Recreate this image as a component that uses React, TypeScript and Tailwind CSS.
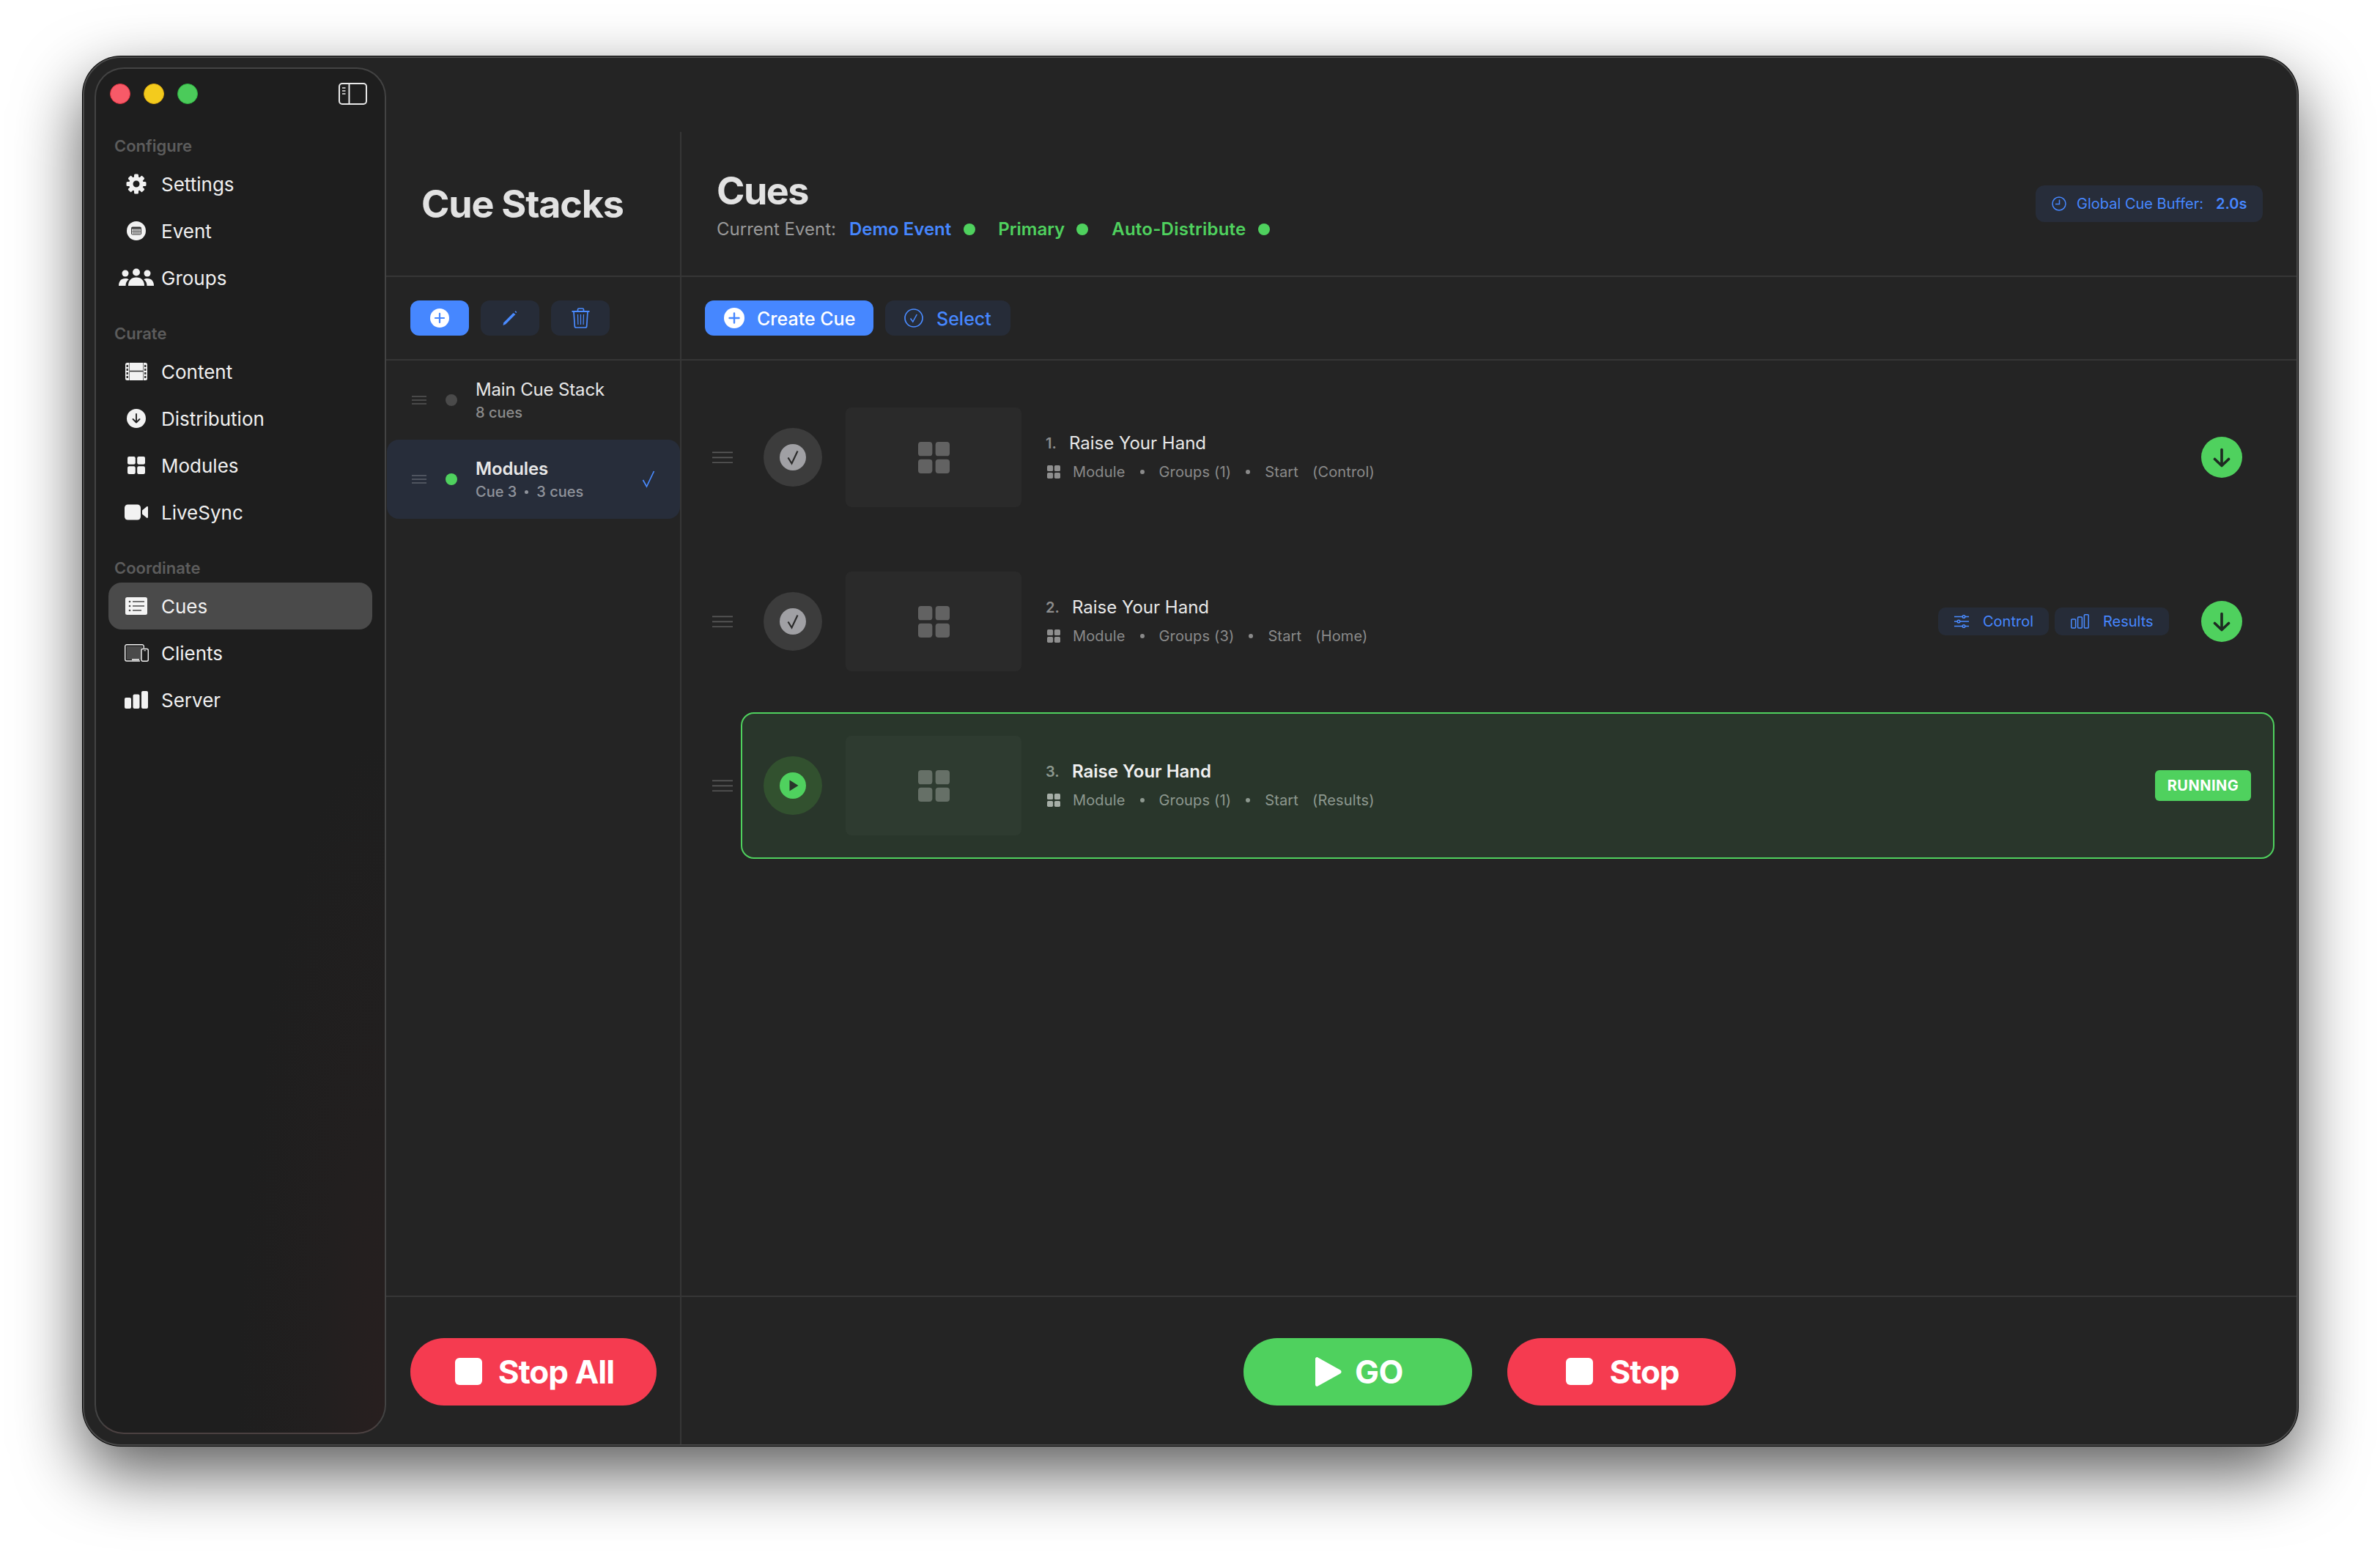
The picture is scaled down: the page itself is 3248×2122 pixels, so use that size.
import type { ReactNode } from "react"

const font = { fontFamily: "Inter, 'Noto Sans', sans-serif" }

// ---- icons ----

function GearIcon() {
  const teeth = [0, 45, 90, 135, 180, 225, 270, 315]
  return (
    <svg width="28" height="28" viewBox="0 0 28 28" fill="#f2f2f2">
      {teeth.map((a) => (
        <rect key={a} x="11" y="0.5" width="6" height="7" rx="1.5" transform={`rotate(${a} 14 14)`} />
      ))}
      <path fillRule="evenodd" d="M14 4a10 10 0 1 0 0 20a10 10 0 0 0 0-20zm0 5.5a4.5 4.5 0 1 1 0 9a4.5 4.5 0 0 1 0-9z" />
    </svg>
  )
}

function EventIcon() {
  return (
    <svg width="26" height="26" viewBox="0 0 26 26">
      <circle cx="13" cy="13" r="13" fill="#f2f2f2" />
      <rect x="6" y="7.5" width="14" height="11" rx="2" fill="#3a3a3a" />
      <rect x="7" y="10.5" width="12" height="7" fill="#d8d8d8" />
      <path d="M9 11v6M11 11v6M13 11v6M15 11v6M17 11v6M7 14h12" stroke="#555" strokeWidth="0.7" />
    </svg>
  )
}

function GroupsIcon() {
  return (
    <svg width="48" height="26" viewBox="0 0 48 26" fill="#f2f2f2">
      <circle cx="9" cy="7" r="4.5" />
      <circle cx="24" cy="5.5" r="5" />
      <circle cx="39" cy="7" r="4.5" />
      <path d="M0 24c0-6 3-10 9-10c2 0 3.500.5 4.800 1.300C10.800 17.500 9.500 20.500 9.500 24z" />
      <path d="M13 24c0-7 4-11.500 11-11.500S35 17 35 24z" />
      <path d="M48 24c0-6-3-10-9-10c-2 0-3.500.5-4.800 1.300c3 2.200 4.300 5.200 4.300 8.700z" />
    </svg>
  )
}

function ContentIcon() {
  return (
    <svg width="30" height="24" viewBox="0 0 30 24">
      <rect width="30" height="24" rx="2.500" fill="#f2f2f2" />
      <path d="M6 11.500h18" stroke="#333" strokeWidth="1.600" />
      <path d="M5.500 0v24M24.500 0v24" stroke="#555" strokeWidth="0.800" />
      {[3, 8, 13, 18].map((y) => (
        <g key={y}>
          <rect x="1.500" y={y} width="2.500" height="3" fill="#3a3a3a" />
          <rect x="26" y={y} width="2.500" height="3" fill="#3a3a3a" />
        </g>
      ))}
    </svg>
  )
}

function DistributionIcon() {
  return (
    <svg width="26" height="26" viewBox="0 0 26 26">
      <circle cx="13" cy="13" r="13" fill="#f2f2f2" />
      <path d="M13 7v11M8.500 14l4.500 4.500l4.500-4.500" fill="none" stroke="#222" strokeWidth="1.900" strokeLinecap="round" strokeLinejoin="round" />
    </svg>
  )
}

function GridIcon({ size, color }: { size: number; color: string }) {
  return (
    <svg width={size} height={size} viewBox="0 0 24 24" fill={color} className="shrink-0">
      <rect x="0" y="0" width="10.800" height="10.800" rx="2.200" />
      <rect x="13.200" y="0" width="10.800" height="10.800" rx="2.200" />
      <rect x="0" y="13.200" width="10.800" height="10.800" rx="2.200" />
      <rect x="13.200" y="13.200" width="10.800" height="10.800" rx="2.200" />
    </svg>
  )
}

function VideoIcon() {
  return (
    <svg width="32" height="22" viewBox="0 0 32 22" fill="#f2f2f2">
      <rect width="22" height="21" y="0.500" rx="4.500" />
      <path d="M24 8.500l6-5c1-.8 2-.3 2 1v13c0 1.300-1 1.800-2 1l-6-5z" />
    </svg>
  )
}

function CuesIcon() {
  return (
    <svg width="30" height="24" viewBox="0 0 30 24">
      <rect width="30" height="24" rx="2.500" fill="#f4f4f4" />
      <g fill="#4a4a4a">
        <circle cx="6" cy="6" r="1.300" />
        <circle cx="6" cy="12" r="1.300" />
        <circle cx="6" cy="18" r="1.300" />
        <rect x="10" y="5.200" width="16" height="1.500" />
        <rect x="10" y="11.200" width="16" height="1.500" />
        <rect x="10" y="17.200" width="12" height="1.500" />
      </g>
    </svg>
  )
}

function ClientsIcon() {
  return (
    <svg width="33" height="24" viewBox="0 0 33 24" fill="none" stroke="#f2f2f2" strokeWidth="1.400">
      <path d="M21 23H3a2.300 2.300 0 0 1-2.300-2.300V3A2.300 2.300 0 0 1 3 .7h21A2.300 2.300 0 0 1 26.300 3v2.500" />
      <rect x="3" y="3" width="21" height="18" fill="#4a4a4a" stroke="none" />
      <path d="M10 21h10" strokeWidth="1.600" />
      <rect x="23" y="6.500" width="9.300" height="16.800" rx="2" fill="#1e1e1e" />
      <path d="M26.500 8.800h2.400" strokeWidth="1" />
    </svg>
  )
}

function ServerIcon() {
  return (
    <svg width="32" height="24" viewBox="0 0 32 24" fill="#f2f2f2">
      <rect x="0" y="9" width="9" height="15" rx="2" />
      <rect x="11.500" y="4.500" width="9" height="19.500" rx="2" />
      <rect x="23" y="0" width="9" height="24" rx="2" />
    </svg>
  )
}

function SidebarToggleIcon() {
  return (
    <svg width="39" height="30" viewBox="0 0 39 30" fill="none" stroke="#e8e8e8" strokeWidth="2">
      <rect x="1" y="1" width="37" height="28" rx="4" />
      <path d="M14.500 1v28" />
      <path d="M5 7h4.500M5 11h4.500M5 15h4.500" strokeWidth="1.600" />
    </svg>
  )
}

function DragIcon({ w, color }: { w: number; color: string }) {
  return (
    <svg width={w} height={w * 0.6} viewBox="0 0 20 12" stroke={color} strokeWidth={w > 24 ? 1.200 : 1.500} className="shrink-0">
      <path d="M0 1h20M0 6h20M0 11h20" />
    </svg>
  )
}

function PlusCircle({ size, color }: { size: number; color: string }) {
  return (
    <svg width={size} height={size} viewBox="0 0 28 28" className="shrink-0">
      <circle cx="14" cy="14" r="14" fill="#fff" />
      <path d="M14 7.500v13M7.500 14h13" stroke={color} strokeWidth="2.400" strokeLinecap="round" />
    </svg>
  )
}

function PencilIcon() {
  return (
    <svg width="20" height="20" viewBox="0 0 20 20" fill="#4a8bff">
      <path d="M14.500 3l3 2L4 18.500L.5 20l.8-3.700z" />
      <path d="M16.500 1.500l1-1.200l1.800 1.400l-.9 1.500z" />
    </svg>
  )
}

function TrashIcon() {
  return (
    <svg width="25" height="28" viewBox="0 0 25 28" fill="none" stroke="#4a8bff" strokeWidth="1.700">
      <path d="M0.500 5h24" strokeWidth="2" />
      <path d="M8.500 5V2.500A1.500 1.500 0 0 1 10 1h5a1.500 1.500 0 0 1 1.500 1.500V5" />
      <path d="M3 5l1.300 20a2 2 0 0 0 2 2h12.400a2 2 0 0 0 2-2L22 5" />
      <path d="M8.500 9l.4 14M12.500 9v14M16.500 9l-.4 14" strokeWidth="1.200" />
    </svg>
  )
}

function SelectIcon() {
  return (
    <svg width="26" height="26" viewBox="0 0 26 26" fill="none" stroke="#4a8bff" className="shrink-0">
      <circle cx="13" cy="13" r="12" strokeWidth="1.700" />
      <path d="M8.500 13.500l3.300 4.500l5.500-10" strokeWidth="1.500" />
    </svg>
  )
}

function ThinCheck() {
  return (
    <svg width="18" height="24" viewBox="0 0 18 24" fill="none" stroke="#4a8bff" strokeWidth="1.700">
      <path d="M1.500 13l5 9L16.500 1" />
    </svg>
  )
}

function ClockIcon() {
  return (
    <svg width="20" height="20" viewBox="0 0 20 20" fill="none" stroke="#4687ff" strokeWidth="1.500" className="shrink-0">
      <circle cx="10" cy="10" r="9" />
      <path d="M10.500 4.500v6H5" />
    </svg>
  )
}

function SlidersIcon() {
  return (
    <svg width="20" height="20" viewBox="0 0 20 20" fill="#262c38" stroke="#4a8bff" strokeWidth="1.500" className="shrink-0">
      <path d="M0 3.500h20M0 10h20M0 16.500h20" />
      <circle cx="13" cy="3.500" r="1.800" />
      <circle cx="6" cy="10" r="1.800" />
      <circle cx="13" cy="16.500" r="1.800" />
    </svg>
  )
}

function BarsIcon() {
  return (
    <svg width="25" height="20" viewBox="0 0 25 20" fill="none" stroke="#4a8bff" strokeWidth="1.500" className="shrink-0">
      <rect x="0.800" y="7" width="5.800" height="12" rx="1" />
      <rect x="9.600" y="4" width="5.800" height="15" rx="1" />
      <rect x="18.400" y="0.800" width="5.800" height="18.200" rx="1" />
    </svg>
  )
}

function DownloadButton() {
  return (
    <div className="w-[56px] h-[56px] rounded-full bg-[#4fd15e] flex items-center justify-center shrink-0">
      <svg width="24" height="27" viewBox="0 0 24 27" fill="none" stroke="#1e2a22" strokeWidth="3.600" strokeLinecap="round" strokeLinejoin="round">
        <path d="M12 2.500v22M2.500 15.500l9.500 9l9.500-9" />
      </svg>
    </div>
  )
}

// ---- sidebar ----

function NavLabel({ children }: { children: ReactNode }) {
  return <div className="h-[30px] pl-[25px] mb-[5px] flex items-center text-[22px] font-semibold text-[#5c5c5c]">{children}</div>
}

function NavItem({ icon, label, active }: { icon: ReactNode; label: string; active?: boolean }) {
  return (
    <div className={`h-[64px] w-[360px] ml-[17px] pl-[8px] flex items-center rounded-[18px] ${active ? "bg-[#4a4a4a]" : ""}`}>
      <div className="w-[60px] flex items-center justify-center shrink-0">{icon}</div>
      <span className="ml-[4px] text-[26px] text-[#f0f0f0]">{label}</span>
    </div>
  )
}

function Sidebar() {
  return (
    <aside className="w-[398px] ml-[14px] mt-[13px] mb-[14px] shrink-0 rounded-[40px] border-2 border-[#434343] border-b-[#4b4141] bg-[#1e1e1e] bg-[radial-gradient(ellipse_at_100%_100%,#281f1f_0%,#221f1f_16%,#1e1e1e_36%)]">
      <div className="h-[90px] pl-[19px] pr-[24px] pt-[19px] flex items-start justify-between">
        <div className="flex gap-[18px] pt-[1px]">
          <div className="w-[28px] h-[28px] rounded-full bg-[#f75a68] border border-[#e0303f]" />
          <div className="w-[28px] h-[28px] rounded-full bg-[#f3cb1d] border border-[#dca90f]" />
          <div className="w-[28px] h-[28px] rounded-full bg-[#4bcb5a] border border-[#2cb140]" />
        </div>
        <SidebarToggleIcon />
      </div>
      <NavLabel>Configure</NavLabel>
      <NavItem icon={<GearIcon />} label="Settings" />
      <NavItem icon={<EventIcon />} label="Event" />
      <NavItem icon={<GroupsIcon />} label="Groups" />
      <div className="h-[29px]" />
      <NavLabel>Curate</NavLabel>
      <NavItem icon={<ContentIcon />} label="Content" />
      <NavItem icon={<DistributionIcon />} label="Distribution" />
      <NavItem icon={<GridIcon size={24} color="#f2f2f2" />} label="Modules" />
      <NavItem icon={<VideoIcon />} label="LiveSync" />
      <div className="h-[29px]" />
      <NavLabel>Coordinate</NavLabel>
      <NavItem icon={<CuesIcon />} label="Cues" active />
      <NavItem icon={<ClientsIcon />} label="Clients" />
      <NavItem icon={<ServerIcon />} label="Server" />
    </aside>
  )
}

// ---- cue stacks column ----

function IconButton({ children, primary }: { children: ReactNode; primary?: boolean }) {
  return (
    <div className={`w-[80px] h-[48px] rounded-[12px] flex items-center justify-center ${primary ? "bg-[#4687ff]" : "bg-[#262c38]"}`}>
      {children}
    </div>
  )
}

function StopButton({ label, width }: { label: string; width: string }) {
  return (
    <div className={`${width} h-[92px] pl-[3px] rounded-full bg-[#f53b50] flex items-center justify-center gap-[22px]`}>
      <div className="w-[37px] h-[37px] rounded-[6px] bg-white" />
      <span className="text-[44px] font-bold text-white tracking-[-1px]">{label}</span>
    </div>
  )
}

function StacksColumn() {
  return (
    <div className="w-[403px] shrink-0 border-r-2 border-[#363636] flex flex-col">
      <div className="h-[198px] border-b-2 border-[#363636] pl-[48px] pt-[2px] flex items-center">
        <h1 className="text-[52px] font-bold text-[#e2e2e2] tracking-[-1.200px]">Cue Stacks</h1>
      </div>
      <div className="h-[114px] border-b-2 border-[#363636] pl-[33px] flex items-center gap-[16px]">
        <IconButton primary>
          <PlusCircle size={26} color="#4687ff" />
        </IconButton>
        <IconButton>
          <PencilIcon />
        </IconButton>
        <IconButton>
          <TrashIcon />
        </IconButton>
      </div>
      <div className="flex-1 pl-[1px]">
        <div className="h-[108px] pl-[34px] flex items-center">
          <DragIcon w={20} color="#565656" />
          <div className="w-[16px] h-[16px] rounded-full bg-[#4a4a4a] ml-[26px] shrink-0" />
          <div className="ml-[25px] pt-[2px]">
            <div className="text-[24px] leading-[32px] text-[#e8e8e8] tracking-[-0.150px]">Main Cue Stack</div>
            <div className="text-[20px] leading-[30px] font-medium text-[#8c8c8c]">8 cues</div>
          </div>
        </div>
        <div className="h-[108px] w-[400px] pl-[34px] pr-[34px] rounded-[16px] bg-[#272d3a] flex items-center">
          <DragIcon w={20} color="#5d626c" />
          <div className="w-[16px] h-[16px] rounded-full bg-[#4fd15e] ml-[26px] shrink-0" />
          <div className="ml-[25px] pt-[2px]">
            <div className="text-[24px] leading-[32px] font-semibold text-[#e8e8e8] tracking-[-0.150px]">Modules</div>
            <div className="text-[20px] leading-[30px] font-medium text-[#8f939b] flex items-center">
              Cue 3<span className="w-[5px] h-[5px] rounded-full bg-[#8f939b] mx-[11px]" />3 cues
            </div>
          </div>
          <div className="ml-auto">
            <ThinCheck />
          </div>
        </div>
      </div>
      <div className="h-[203px] border-t-2 border-[#363636] pl-[33px] pt-[2px] flex items-center">
        <StopButton label="Stop All" width="w-[336px]" />
      </div>
    </div>
  )
}

// ---- cues column ----

function Chip({ icon, label, width }: { icon: ReactNode; label: string; width: string }) {
  return (
    <div className={`${width} h-[38px] rounded-[10px] bg-[#262c38] pl-[22px] flex items-center gap-[19px]`}>
      {icon}
      <span className="text-[20px] text-[#4687ff]">{label}</span>
    </div>
  )
}

function Dot({ color }: { color: string }) {
  return <span className="w-[6px] h-[6px] rounded-full mx-[20px] shrink-0" style={{ backgroundColor: color }} />
}

type Cue = {
  num: number
  groups: number
  target: string
  state: "done" | "running"
  chips?: boolean
}

const cues: Cue[] = [
  { num: 1, groups: 1, target: "(Control)", state: "done" },
  { num: 2, groups: 3, target: "(Home)", state: "done", chips: true },
  { num: 3, groups: 1, target: "(Results)", state: "running" },
]

function CueRow({ cue }: { cue: Cue }) {
  const running = cue.state === "running"
  const sub = running ? "#8d988f" : "#8a8a8a"
  return (
    <div className="h-[200px] flex items-center">
      <DragIcon w={28} color="#585858" />
      <div
        className={`ml-[11px] flex-1 h-[200px] rounded-[18px] border-2 pl-[29px] flex items-center ${
          running ? "border-[#4fd15e] bg-[#29362b] pr-[30px]" : "border-transparent pr-[42px]"
        }`}
      >
        <div className={`w-[80px] h-[80px] rounded-full flex items-center justify-center shrink-0 ${running ? "bg-[#32512f]" : "bg-[#3c3c3c]"}`}>
          {running ? (
            <svg width="36" height="36" viewBox="0 0 36 36">
              <circle cx="18" cy="18" r="18" fill="#4fd15e" />
              <path d="M13.500 10.500v15l12-7.500z" fill="#29362b" />
            </svg>
          ) : (
            <svg width="36" height="36" viewBox="0 0 36 36">
              <circle cx="18" cy="18" r="18" fill="#a0a0a4" />
              <path d="M11.500 18.500l5 8L24.500 9.500" fill="none" stroke="#2b2b2b" strokeWidth="2.200" />
            </svg>
          )}
        </div>
        <div className={`ml-[32px] w-[240px] h-[136px] rounded-[8px] flex items-center justify-center shrink-0 ${running ? "bg-[#2e3b30]" : "bg-[#2a2a2a]"}`}>
          <GridIcon size={43} color={running ? "#667067" : "#626262"} />
        </div>
        <div className="ml-[33px]">
          <div className="h-[36px] flex items-center">
            <span className={`text-[20px] font-semibold ${running ? "text-[#8d988f]" : "text-[#8d8d8d]"}`} style={{ width: cue.num === 1 ? 32 : 36 }}>
              {cue.num}.
            </span>
            <span className={`text-[24px] ${running ? "font-semibold text-[#f0f0f0]" : "text-[#e8e8e8]"}`}>Raise Your Hand</span>
          </div>
          <div className="h-[36px] mt-[3px] flex items-center text-[20px] tracking-[0.150px]" style={{ color: sub }}>
            <span className="ml-[2px] mr-[17px]">
              <GridIcon size={18} color={running ? "#a6aea7" : "#8f8f8f"} />
            </span>
            <span>Module</span>
            <Dot color={sub} />
            <span>Groups ({cue.groups})</span>
            <Dot color={sub} />
            <span className="mr-[19px]">Start</span>
            <span>{cue.target}</span>
          </div>
        </div>
        <div className="ml-auto flex items-center">
          {cue.chips && (
            <div className="flex gap-[8px] mr-[44px]">
              <Chip icon={<SlidersIcon />} label="Control" width="w-[151px]" />
              <Chip icon={<BarsIcon />} label="Results" width="w-[156px]" />
            </div>
          )}
          {running ? (
            <div className="w-[131px] h-[42px] rounded-[6px] bg-[#4fd15e] flex items-center justify-center text-[20px] font-bold tracking-[0.5px] text-white">
              RUNNING
            </div>
          ) : (
            <DownloadButton />
          )}
        </div>
      </div>
    </div>
  )
}

function CuesColumn() {
  return (
    <div className="flex-1 flex flex-col min-w-0">
      <div className="h-[198px] border-b-2 border-[#363636] pl-[48px] pr-[46px] flex items-center justify-between">
        <div className="pt-[4px]">
          <h1 className="h-[62px] flex items-center text-[52px] font-bold text-[#e2e2e2] tracking-[-1.500px]">Cues</h1>
          <div className="h-[34px] mt-[4px] flex items-center text-[24px] whitespace-nowrap">
            <span className="text-[#9a9a9a]">Current Event:</span>
            <span className="ml-[18px] font-semibold text-[#4687ff]">Demo Event</span>
            <span className="w-[16px] h-[16px] rounded-full bg-[#4fd15e] ml-[17px]" />
            <span className="ml-[31px] font-semibold text-[#4fd15e]">Primary</span>
            <span className="w-[16px] h-[16px] rounded-full bg-[#4fd15e] ml-[16px]" />
            <span className="ml-[32px] font-semibold text-[#4fd15e] tracking-[0.250px]">Auto-Distribute</span>
            <span className="w-[16px] h-[16px] rounded-full bg-[#4fd15e] ml-[16px]" />
          </div>
        </div>
        <div className="w-[310px] h-[50px] rounded-[12px] bg-[#272d3a] pl-[22px] flex items-center text-[20px] text-[#4687ff] whitespace-nowrap">
          <ClockIcon />
          <span className="ml-[14px]">Global Cue Buffer:</span>
          <span className="ml-[17px] font-semibold">2.0s</span>
        </div>
      </div>
      <div className="h-[114px] border-b-2 border-[#363636] pl-[32px] flex items-center gap-[16px]">
        <div className="w-[230px] h-[48px] rounded-[12px] bg-[#4687ff] pl-[26px] flex items-center gap-[17px]">
          <PlusCircle size={28} color="#4687ff" />
          <span className="pt-[3px] text-[25px] font-medium text-white">Create Cue</span>
        </div>
        <div className="w-[171px] h-[48px] rounded-[12px] bg-[#262c38] pl-[26px] flex items-center gap-[18px]">
          <SelectIcon />
          <span className="pt-[3px] text-[25px] font-medium text-[#4687ff]">Select</span>
        </div>
      </div>
      <div className="flex-1 pt-[32px] pl-[42px] pr-[30px] flex flex-col gap-[24px]">
        {cues.map((cue) => (
          <CueRow key={cue.num} cue={cue} />
        ))}
      </div>
      <div className="h-[203px] border-t-2 border-[#363636] pl-[2px] pt-[2px] flex items-center justify-center gap-[48px]">
        <div className="w-[312px] h-[92px] pl-[4px] rounded-full bg-[#4fd15e] flex items-center justify-center gap-[18px]">
          <svg width="36" height="40" viewBox="0 0 36 40" fill="#fff">
            <path d="M0 2.500C0 .5 2 -.5 3.500 .5L34 17.500c2 1.200 2 3.800 0 5L3.500 39.500C2 40.500 0 39.500 0 37.500z" />
          </svg>
          <span className="text-[44px] font-bold text-white tracking-[-0.5px]">GO</span>
        </div>
        <StopButton label="Stop" width="w-[312px]" />
      </div>
    </div>
  )
}

export default function App() {
  return (
    <div className="w-[3248px] h-[2122px] bg-white pt-[77px] pl-[113px] overflow-hidden" style={font}>
      <div className="w-[3023px] h-[1896px] rounded-[52px] border-2 border-[#4a4a4a] bg-[#242424] flex shadow-[0_0_0_1px_#000,0_36px_90px_rgba(0,0,0,0.65)]">
        <Sidebar />
        <div className="flex-1 min-w-0 pt-[101px] flex">
          <StacksColumn />
          <CuesColumn />
        </div>
      </div>
    </div>
  )
}
